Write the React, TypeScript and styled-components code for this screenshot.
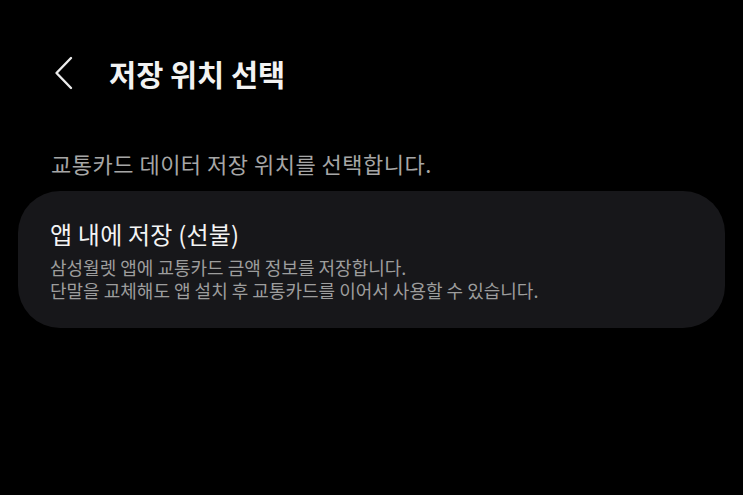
import React from 'react';
import styled, { createGlobalStyle } from 'styled-components';

const GlobalStyle = createGlobalStyle`
  html, body {
    margin: 0;
    padding: 0;
    background: #000;
  }
  body {
    font-family: 'Noto Sans CJK KR', 'Noto Sans', sans-serif;
    font-feature-settings: 'palt';
    color: #fff;
  }
`;

const Screen = styled.div`
  width: 743px;
  height: 495px;
  background: #000;
  display: flex;
  flex-direction: column;
  overflow: hidden;
`;

const Header = styled.div`
  display: flex;
  align-items: center;
  height: 56px;
  margin-top: 45px;
  padding-left: 52px;
  gap: 33px;
`;

const BackButton = styled.button`
  background: none;
  border: none;
  padding: 0;
  width: 24px;
  height: 40px;
  display: flex;
  align-items: center;
  justify-content: center;
  cursor: pointer;
`;

const Title = styled.h1`
  margin: 0;
  font-size: 29.5px;
  font-weight: 700;
  color: #f2f2f2;
`;

const Description = styled.p`
  margin: 47px 0 0 51px;
  font-size: 22px;
  line-height: 30px;
  color: #a6a6a6;
  letter-spacing: 0.5px;
`;

const OptionCard = styled.div`
  margin: 13px 18px 0 18px;
  height: 137px;
  box-sizing: border-box;
  border-radius: 42px;
  background: #17171a;
  padding: 28px 32px 0 32px;
  display: flex;
  flex-direction: column;
`;

const OptionTitle = styled.div`
  font-size: 24px;
  color: #f4f4f4;
  line-height: 30px;
  letter-spacing: 0.2px;
`;

const OptionText = styled.div`
  margin-top: 7px;
  display: flex;
  flex-direction: column;
  font-size: 18px;
  color: #9d9d9d;
`;

const TextLine = styled.span`
  display: block;
  height: 23px;
  line-height: 23px;
`;

export default function App() {
  return (
    <Screen>
      <GlobalStyle />
      <Header>
        <BackButton aria-label="뒤로">
          <svg width="20" height="34" viewBox="0 0 20 34" fill="none">
            <path d="M17 2 L2.5 17 L17 32" stroke="#ececec" strokeWidth="2.4" strokeLinecap="round" strokeLinejoin="round" />
          </svg>
        </BackButton>
        <Title>저장 위치 선택</Title>
      </Header>
      <Description>교통카드 데이터 저장 위치를 선택합니다.</Description>
      <OptionCard>
        <OptionTitle>앱 내에 저장 (선불)</OptionTitle>
        <OptionText>
          <TextLine>삼성월렛 앱에 교통카드 금액 정보를 저장합니다.</TextLine>
          <TextLine>단말을 교체해도 앱 설치 후 교통카드를 이어서 사용할 수 있습니다.</TextLine>
        </OptionText>
      </OptionCard>
    </Screen>
  );
}
